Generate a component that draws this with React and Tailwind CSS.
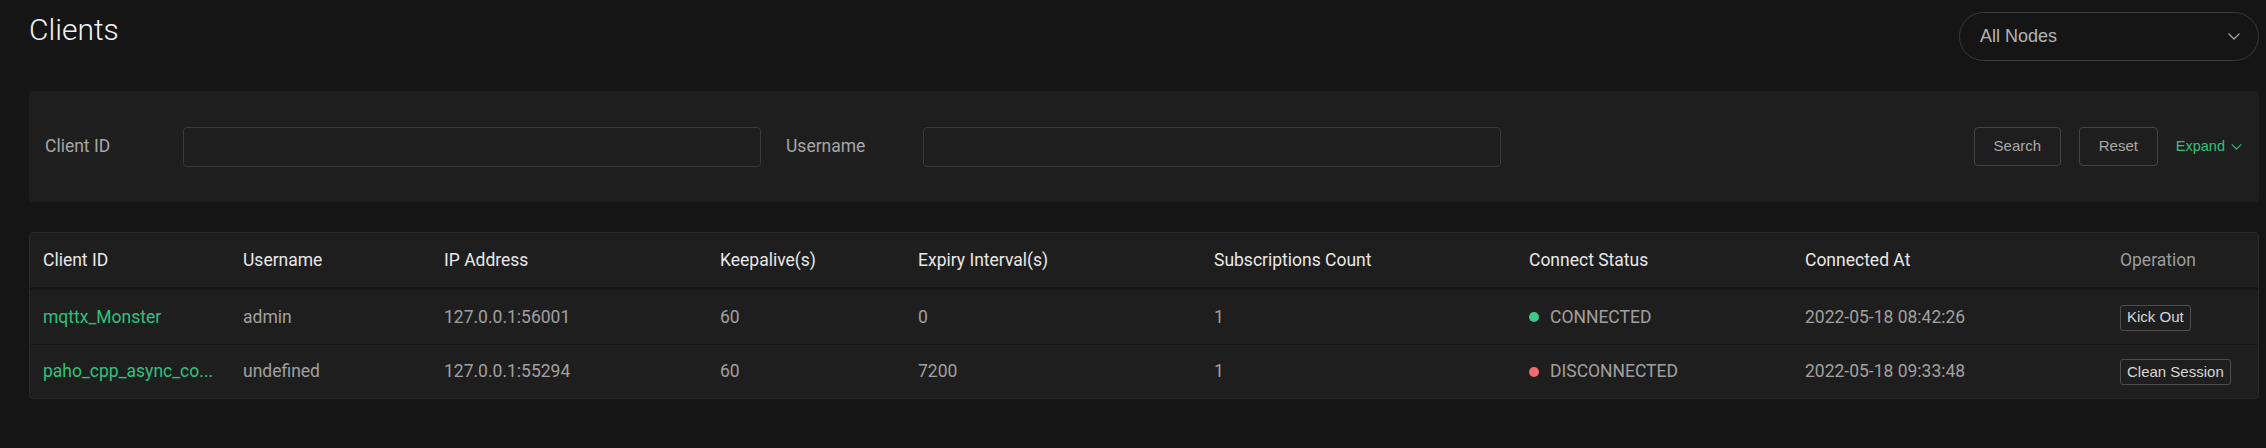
import React from "react";

const ROBOTO = "font-[family-name:Roboto,'Noto_Sans',sans-serif]";
const ARIAL = "font-[family-name:'Liberation_Sans',Arial,sans-serif]";

const GRID =
  "grid grid-cols-[200px_201px_276px_198px_296px_315px_276px_315px_1fr] items-center";

function Chevron({ className, color }) {
  return (
    <svg className={className} viewBox="0 0 12 7" fill="none">
      <polyline
        points="0.8,0.8 6,6 11.2,0.8"
        stroke={color}
        strokeWidth="1.2"
        strokeLinecap="round"
        strokeLinejoin="round"
      />
    </svg>
  );
}

const headers = [
  "Client ID",
  "Username",
  "IP Address",
  "Keepalive(s)",
  "Expiry Interval(s)",
  "Subscriptions Count",
  "Connect Status",
  "Connected At",
];

const rows = [
  {
    id: "mqttx_Monster",
    user: "admin",
    ip: "127.0.0.1:56001",
    keep: "60",
    expiry: "0",
    subs: "1",
    connected: true,
    at: "2022-05-18 08:42:26",
    op: "Kick Out",
  },
  {
    id: "paho_cpp_async_co...",
    user: "undefined",
    ip: "127.0.0.1:55294",
    keep: "60",
    expiry: "7200",
    subs: "1",
    connected: false,
    at: "2022-05-18 09:33:48",
    op: "Clean Session",
  },
];

export default function App() {
  return (
    <div className={`min-h-[448px] w-full bg-[#151515] pl-[29px] pr-[7px] ${ROBOTO}`}>
      {/* Top bar */}
      <div className="flex items-start justify-between">
        <h1 className="mt-[15px] text-[30px] font-light leading-[30px] text-[#f2f2f2]">
          Clients
        </h1>
        <div className="mt-[12px] flex h-[49px] w-[300px] items-center justify-between rounded-full border border-[#3a3a3a] pl-[20px] pr-[18px]">
          <span className={`${ARIAL} text-[18px] text-[#b4b4b4]`}>All Nodes</span>
          <Chevron className="h-[7px] w-[12px]" color="#b0b0b0" />
        </div>
      </div>

      {/* Filter card */}
      <div className="mt-[30px] flex h-[111px] items-center rounded-[4px] bg-[#1f1e1f] pl-[16px] pr-[17px]">
        <div className="flex items-center">
          <span className="w-[138px] text-[17.5px] text-[#a6a6a6]">Client ID</span>
          <div className="h-[40px] w-[578px] rounded-[4px] border border-[#3a3a3c]" />
        </div>
        <div className="ml-[25px] flex items-center">
          <span className="w-[137px] text-[17.5px] text-[#a6a6a6]">Username</span>
          <div className="h-[40px] w-[578px] rounded-[4px] border border-[#3a3a3c]" />
        </div>
        <div className="ml-auto flex items-center">
          <button
            className={`${ARIAL} h-[39px] w-[87px] rounded-[4px] border border-[#434346] text-[15px] text-[#a8a8a8]`}
          >
            Search
          </button>
          <button
            className={`${ARIAL} ml-[18px] h-[39px] w-[79px] rounded-[4px] border border-[#434346] text-[15px] text-[#a8a8a8]`}
          >
            Reset
          </button>
          <span className={`${ARIAL} ml-[18px] flex items-center text-[14.5px] text-[#2fc27b]`}>
            Expand
            <Chevron className="ml-[6px] h-[6px] w-[11px]" color="#2fc27b" />
          </span>
        </div>
      </div>

      {/* Table card */}
      <div className="mt-[30px] overflow-hidden rounded-[4px] border border-[#2a2a2b] bg-[#1f1e1f]">
        <div className={`${GRID} h-[57px] border-b-[3px] border-[#161616]`}>
          {headers.map((h) => (
            <div key={h} className="px-[13px] text-[17.5px] text-[#e8e8e8]">
              {h}
            </div>
          ))}
          <div className="px-[13px] text-[17.5px] text-[#9c9c9c]">Operation</div>
        </div>
        {rows.map((r, i) => (
          <div
            key={r.id}
            className={`${GRID} ${i === 0 ? "h-[55px] border-b border-[#161616]" : "h-[53px]"} text-[17.5px] text-[#a0a0a0]`}
          >
            <div className="px-[13px] whitespace-nowrap text-[#2fc27b]">{r.id}</div>
            <div className="px-[13px]">{r.user}</div>
            <div className="px-[13px]">{r.ip}</div>
            <div className="px-[13px]">{r.keep}</div>
            <div className="px-[13px]">{r.expiry}</div>
            <div className="px-[13px]">{r.subs}</div>
            <div className="flex items-center px-[13px]">
              <span
                className={`h-[10px] w-[10px] rounded-full ${r.connected ? "bg-[#3bc98a]" : "bg-[#f66b6b]"}`}
              />
              <span className="ml-[11px]">{r.connected ? "CONNECTED" : "DISCONNECTED"}</span>
            </div>
            <div className="px-[13px]">{r.at}</div>
            <div className="px-[13px]">
              <button
                className={`${ARIAL} h-[26px] rounded-[3px] border border-[#4e4e50] px-[6px] text-[15px] text-[#d6d6d6]`}
              >
                {r.op}
              </button>
            </div>
          </div>
        ))}
      </div>
    </div>
  );
}
